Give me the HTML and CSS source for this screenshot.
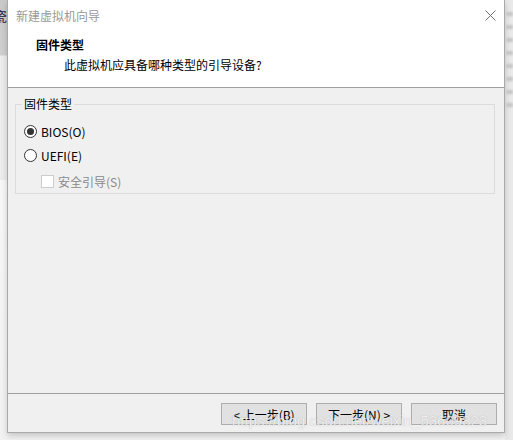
FILE: index.html
```html
<!DOCTYPE html>
<html lang="zh-CN">
<head>
    <meta charset="UTF-8">
    <title>新建虚拟机向导</title>
    <link rel="stylesheet" href="styles.css">
</head>
<body>
    <div class="screen">
        <div class="side-left"><span>瓷</span></div>

        <div class="dialog">
            <div class="header">
                <div class="titlebar">
                    <span class="title">新建虚拟机向导</span>
                    <svg class="close" width="11" height="11" viewBox="0 0 11 11">
                        <path d="M0.5 0.5 L10.5 10.5 M10.5 0.5 L0.5 10.5" stroke="#6f6f6f" stroke-width="1" fill="none"/>
                    </svg>
                </div>
                <div class="head-title">固件类型</div>
                <div class="head-sub">此虚拟机应具备哪种类型的引导设备?</div>
            </div>

            <div class="content">
                <fieldset class="group">
                    <legend>固件类型</legend>
                    <div class="option">
                        <span class="radio checked"></span>
                        <span>BIOS(O)</span>
                    </div>
                    <div class="option">
                        <span class="radio"></span>
                        <span>UEFI(E)</span>
                    </div>
                    <div class="option sub disabled">
                        <span class="check"></span>
                        <span>安全引导(S)</span>
                    </div>
                </fieldset>
            </div>

            <div class="footer">
                <button class="btn">&lt; 上一步(B)</button>
                <button class="btn">下一步(N) &gt;</button>
                <button class="btn">取消</button>
                <div class="watermark">https://blog.csdn.net/weixin_53609823</div>
            </div>
        </div>

        <div class="side-right">
            <div class="blur-line"></div>
            <div class="blur-line"></div>
            <div class="blur-line"></div>
            <div class="blur-line"></div>
            <div class="blur-line"></div>
            <div class="blur-line"></div>
            <div class="blur-line"></div>
            <div class="blur-line"></div>
        </div>
    </div>
</body>
</html>
```

FILE: styles.css
```css
body {
    margin: 0;
    font-family: "Noto Sans CJK SC", "Microsoft YaHei", sans-serif;
    font-size: 12px;
    color: #000;
    background: #f4f4f4;
}

.screen {
    width: 513px;
    height: 440px;
    display: flex;
    overflow: hidden;
    background: linear-gradient(#fafafa, #f2f2f2);
}

.side-left {
    width: 7px;
    height: 180px;
    background: linear-gradient(#c9c9c9 0, #cfcfcf 55px, #ececec 56px, #ececec 100%);
    overflow: hidden;
    position: relative;
}

.side-left span {
    position: absolute;
    left: -6px;
    top: 6px;
    font-size: 13px;
    color: #1a1a3a;
}

.dialog {
    width: 497px;
    height: 432px;
    border: 1px solid #a9a9a9;
    border-top: none;
    background: #f0f0f0;
    display: flex;
    flex-direction: column;
    box-shadow: 0 3px 6px rgba(0, 0, 0, 0.18);
    position: relative;
}

.header {
    height: 87px;
    background: #fff;
    border-bottom: 1px solid #a0a0a0;
}

.titlebar {
    height: 31px;
    display: flex;
    align-items: center;
    justify-content: space-between;
    padding: 0 8px 0 8px;
}

.title {
    color: #999;
    line-height: 14px;
}

.head-title {
    font-weight: bold;
    padding-left: 28px;
    line-height: 20px;
    margin-top: 4px;
}

.head-sub {
    padding-left: 56px;
    line-height: 20px;
}

.content {
    flex: 1;
    padding: 8px 9px 0 7px;
}

.group {
    margin: 0;
    padding: 7px 0 0 8px;
    border: 1px solid #dcdcdc;
}

.group legend {
    padding: 0 2px;
    margin-left: -2px;
    line-height: 16px;
}

.option {
    display: flex;
    align-items: center;
    height: 24px;
    gap: 4px;
}

.option.sub {
    padding-left: 17px;
    padding-top: 2px;
}

.disabled {
    color: #8a8a8a;
}

.radio {
    width: 11px;
    height: 11px;
    border: 1px solid #333;
    border-radius: 50%;
    background: #fff;
    position: relative;
}

.radio.checked::after {
    content: "";
    position: absolute;
    left: 2px;
    top: 2px;
    width: 7px;
    height: 7px;
    border-radius: 50%;
    background: #333;
}

.check {
    width: 11px;
    height: 11px;
    border: 1px solid #cccccc;
    background: #fff;
}

.footer {
    height: 39px;
    border-top: 1px solid #a0a0a0;
    display: flex;
    justify-content: flex-end;
    align-items: flex-start;
    padding: 9px 7px 0 0;
    box-sizing: border-box;
    gap: 9px;
    position: relative;
}

.btn {
    width: 86px;
    height: 22px;
    border: 1px solid #adadad;
    background: #e1e1e1;
    font-family: inherit;
    font-size: 12px;
    color: #000;
    padding: 0;
}

.watermark {
    position: absolute;
    left: 224px;
    top: 18px;
    font-family: "Liberation Sans", sans-serif;
    font-size: 15px;
    color: rgba(255, 255, 255, 0.8);
    text-shadow: 0 0 1px rgba(110, 110, 110, 0.5);
    white-space: nowrap;
    pointer-events: none;
}

.side-right {
    width: 8px;
    background: #e9e9e9;
    padding-top: 12px;
}

.blur-line {
    height: 4px;
    margin: 0 0 9px 1px;
    background: #c4c4c4;
    filter: blur(1px);
}
```
